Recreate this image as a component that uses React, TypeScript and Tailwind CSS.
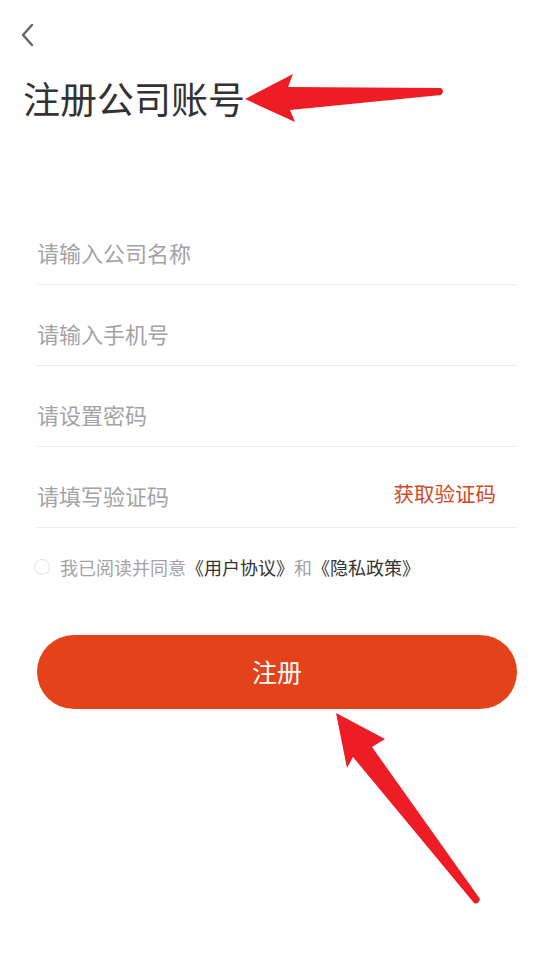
import { useState } from "react";

const fields = [
  { key: "company", placeholder: "请输入公司名称", type: "text" },
  { key: "phone", placeholder: "请输入手机号", type: "tel" },
  { key: "password", placeholder: "请设置密码", type: "password" },
];

function Arrows() {
  return (
    <svg
      className="pointer-events-none absolute inset-0"
      width="554"
      height="961"
      viewBox="0 0 554 961"
    >
      {/* arrow pointing at the title */}
      <path
        d="M245 99 L293 74 L288 87 L441 88 Q445 91 441 95 L290 110 L295 122 Z"
        fill="#ee1c25"
        strokeLinejoin="round"
      />
      {/* arrow pointing at the submit button */}
      <path
        d="M336 713 L385 739 L372 747 L480 899 Q478 905 474 903 L353 757 L347 768 Z"
        fill="#ee1c25"
        strokeLinejoin="round"
      />
    </svg>
  );
}

export default function App() {
  const [agreed, setAgreed] = useState(false);

  return (
    <div className="relative h-[961px] w-full overflow-hidden bg-white font-['Noto_Sans_CJK_SC','Noto_Sans',sans-serif]">
      <div className="pl-[18px] pt-[23px]">
        <button className="flex h-[24px] w-[20px] items-center justify-center">
          <svg width="20" height="24" viewBox="0 0 20 24" fill="none">
            <path
              d="M14 2 L5 12 L14 22"
              stroke="#666666"
              strokeWidth="2.4"
              strokeLinecap="round"
              strokeLinejoin="round"
            />
          </svg>
        </button>
      </div>

      <h1 className="mt-[29px] pl-[23px] text-[37px] leading-[44px] font-normal text-[#333333]">
        注册公司账号
      </h1>

      <div className="mt-[84px] px-[37px]">
        {fields.map((f) => (
          <div
            key={f.key}
            className="flex h-[81px] items-end border-b border-[#ebebeb] pb-[17px]"
          >
            <input
              type={f.type}
              placeholder={f.placeholder}
              className="h-[30px] w-full bg-transparent text-[22px] leading-[30px] text-[#333333] outline-none placeholder:text-[#a3a3a3]"
            />
          </div>
        ))}
        <div className="flex h-[81px] items-end border-b border-[#ebebeb] pb-[17px]">
          <input
            type="text"
            placeholder="请填写验证码"
            className="h-[30px] min-w-0 flex-1 bg-transparent text-[22px] leading-[30px] text-[#333333] outline-none placeholder:text-[#a3a3a3]"
          />
          <button className="pb-[2px] pr-[21px] text-[20.5px] leading-[30px] text-[#d2481f]">
            获取验证码
          </button>
        </div>
      </div>

      <div className="mt-[27px] flex h-[24px] items-center pl-[34px]">
        <button
          onClick={() => setAgreed(!agreed)}
          className={
            agreed
              ? "h-[16px] w-[16px] rounded-full border border-[#e44218] bg-[#e44218]"
              : "h-[16px] w-[16px] rounded-full border border-[#e2e2e2] bg-white"
          }
        />
        <p className="ml-[10px] text-[18px] leading-[24px] text-[#a3a3a3]">
          我已阅读并同意<span className="text-[#333333]">《用户协议》</span>和
          <span className="text-[#333333]">《隐私政策》</span>
        </p>
      </div>

      <div className="mt-[56px] px-[37px]">
        <button className="flex h-[74px] w-full items-center justify-center rounded-full bg-[#e44218] text-[25px] text-white">
          注册
        </button>
      </div>

      <Arrows />
    </div>
  );
}
